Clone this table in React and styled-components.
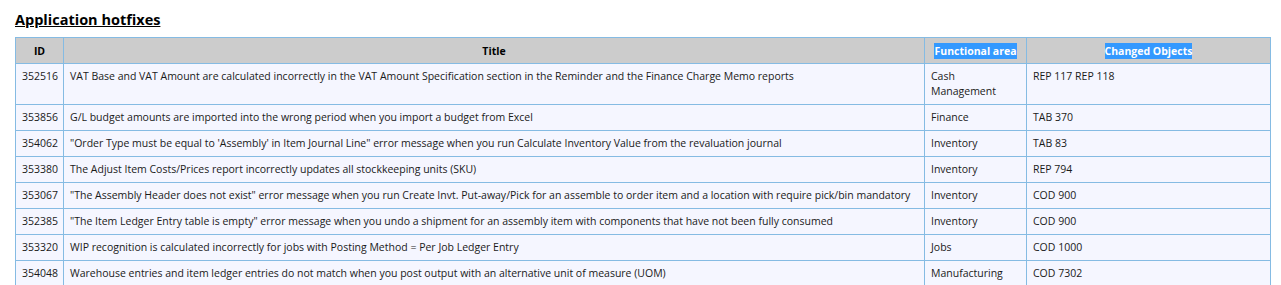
import React from 'react';
import styled, { createGlobalStyle } from 'styled-components';

const GlobalStyle = createGlobalStyle`
  body {
    margin: 0;
    background: #ffffff;
    font-family: "Open Sans", "Noto Sans", sans-serif;
    color: #1a1a1a;
  }
`;

const Page = styled.div`
  padding: 10px 11px 0 15px;
`;

const Heading = styled.h2`
  margin: 0 0 7px;
  font-size: 14.5px;
  line-height: 20px;
  font-weight: 700;
  text-decoration: underline;
  color: #000;
`;

const Table = styled.table`
  width: 1255px;
  border-collapse: collapse;
  table-layout: fixed;
  font-size: 10.5px;
`;

const Col = styled.col`
  width: ${({ $w }) => $w}px;
`;

const HeadCell = styled.th`
  background: #cccccc;
  border: 1px solid #85bbe3;
  height: 25px;
  padding: 0 6px;
  font-weight: 700;
  text-align: center;
  color: #000;
`;

// header labels that show up selected/highlighted
const Marked = styled.span`
  background: ${({ $on }) => ($on ? '#3399ff' : 'transparent')};
  color: ${({ $on }) => ($on ? '#ffffff' : 'inherit')};
  padding: 1px 0;
`;

const Cell = styled.td`
  background: #f5f6ff;
  border: 1px solid #85bbe3;
  padding: 5px ${({ $id }) => ($id ? '4px 5px 6px' : '6px 5px')};
  line-height: 15px;
  vertical-align: top;
  height: 15px;
  white-space: ${({ $id }) => ($id ? 'nowrap' : 'normal')};
`;

const rows = [
  ['352516', 'VAT Base and VAT Amount are calculated incorrectly in the VAT Amount Specification section in the Reminder and the Finance Charge Memo reports', 'Cash Management', 'REP 117 REP 118'],
  ['353856', 'G/L budget amounts are imported into the wrong period when you import a budget from Excel', 'Finance', 'TAB 370'],
  ['354062', '"Order Type must be equal to \'Assembly\' in Item Journal Line" error message when you run Calculate Inventory Value from the revaluation journal', 'Inventory', 'TAB 83'],
  ['353380', 'The Adjust Item Costs/Prices report incorrectly updates all stockkeeping units (SKU)', 'Inventory', 'REP 794'],
  ['353067', '"The Assembly Header does not exist" error message when you run Create Invt. Put-away/Pick for an assemble to order item and a location with require pick/bin mandatory', 'Inventory', 'COD 900'],
  ['352385', '"The Item Ledger Entry table is empty" error message when you undo a shipment for an assembly item with components that have not been fully consumed', 'Inventory', 'COD 900'],
  ['353320', 'WIP recognition is calculated incorrectly for jobs with Posting Method = Per Job Ledger Entry', 'Jobs', 'COD 1000'],
  ['354048', 'Warehouse entries and item ledger entries do not match when you post output with an alternative unit of measure (UOM)', 'Manufacturing', 'COD 7302'],
];

const App = () => {
  return (
    <Page>
      <GlobalStyle />
      <Heading>Application hotfixes</Heading>
      <Table>
        <colgroup>
          <Col $w={48} />
          <Col $w={861} />
          <Col $w={102} />
          <Col $w={244} />
        </colgroup>
        <thead>
          <tr>
            <HeadCell>ID</HeadCell>
            <HeadCell>Title</HeadCell>
            <HeadCell><Marked $on>Functional area</Marked></HeadCell>
            <HeadCell><Marked $on>Changed Objects</Marked></HeadCell>
          </tr>
        </thead>
        <tbody>
          {rows.map(([id, title, area, objects]) => (
            <tr key={id}>
              <Cell $id>{id}</Cell>
              <Cell>{title}</Cell>
              <Cell>{area}</Cell>
              <Cell>{objects}</Cell>
            </tr>
          ))}
        </tbody>
      </Table>
    </Page>
  );
};

export default App;
